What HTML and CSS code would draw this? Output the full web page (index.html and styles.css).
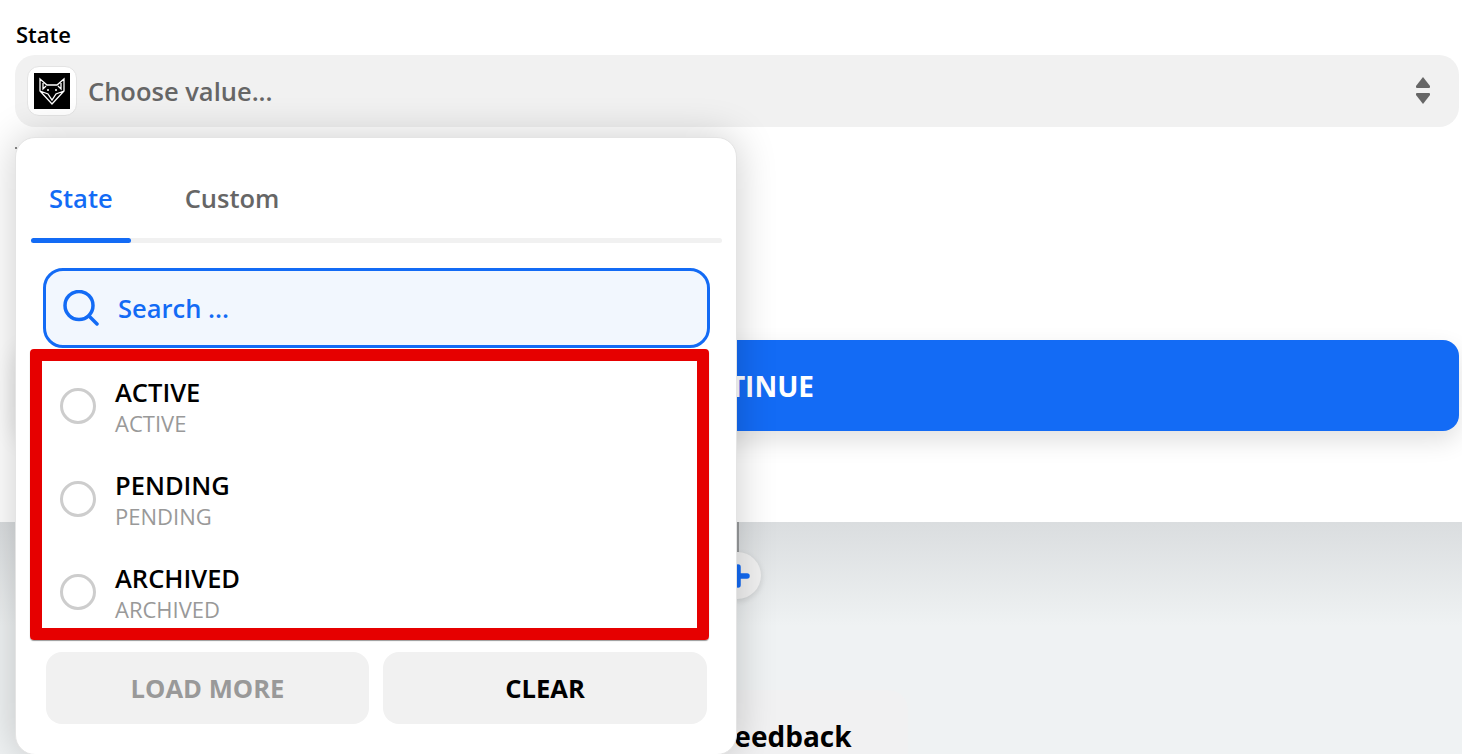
FILE: index.html
```html
<!DOCTYPE html>
<html lang="en">
<head>
    <meta charset="UTF-8">
    <title>State field</title>
    <link rel="stylesheet" href="styles.css">
</head>
<body>
  <div class="page">
    <section class="form-panel">
      <label class="field-label">State</label>
      <div class="select-box">
        <span class="app-icon">
          <span class="app-icon-inner">
            <svg viewBox="0 0 36 36" width="36" height="36">
              <rect width="36" height="36" fill="#000"/>
              <path d="M6 6 L13 12 H23 L30 6 V18 L18 31 L6 18 Z M6 18 L14 21 L18 27 L22 21 L30 18 M9 10 V16 L12 13 M27 10 V16 L24 13" fill="none" stroke="#fff" stroke-width="1.3"/>
              <circle cx="14" cy="17" r="1" fill="#fff"/>
              <circle cx="22" cy="17" r="1" fill="#fff"/>
            </svg>
          </span>
        </span>
        <span class="select-placeholder">Choose value...</span>
        <svg class="select-arrows" viewBox="0 0 16 28" width="16" height="28">
          <path d="M8 0 L15 9 Q15.5 11 14 11 H2 Q0.5 11 1 9 Z" fill="#666"/>
          <path d="M8 27 L15 18 Q15.5 16 14 16 H2 Q0.5 16 1 18 Z" fill="#666"/>
        </svg>
      </div>
      <span class="peek-dot"></span>
      <button class="continue-btn">CONTINUE</button>
    </section>

    <section class="canvas-panel">
      <div class="connector"></div>
      <div class="add-step">
        <svg viewBox="0 0 24 24" width="24" height="24">
          <path d="M12 3 V21 M3 12 H21" stroke="#136bf5" stroke-width="5.5" stroke-linecap="round"/>
        </svg>
      </div>
      <div class="feedback-card">Feedback</div>
    </section>

    <div class="popover">
      <div class="tabs">
        <span class="tab tab-active">State</span>
        <span class="tab">Custom</span>
      </div>
      <div class="tab-track"><div class="tab-bar"></div></div>

      <div class="search-box">
        <svg viewBox="0 0 36 36" width="36" height="36">
          <circle cx="16" cy="15.5" r="14" fill="none" stroke="#136bf5" stroke-width="3.5"/>
          <path d="M26 26 L34 34" stroke="#136bf5" stroke-width="3.5" stroke-linecap="round"/>
        </svg>
        <span>Search ...</span>
      </div>

      <div class="option-list">
        <div class="option">
          <span class="radio"></span>
          <div class="option-text">
            <div class="option-title">ACTIVE</div>
            <div class="option-sub">ACTIVE</div>
          </div>
        </div>
        <div class="option">
          <span class="radio"></span>
          <div class="option-text">
            <div class="option-title">PENDING</div>
            <div class="option-sub">PENDING</div>
          </div>
        </div>
        <div class="option">
          <span class="radio"></span>
          <div class="option-text">
            <div class="option-title">ARCHIVED</div>
            <div class="option-sub">ARCHIVED</div>
          </div>
        </div>
      </div>

      <div class="popover-actions">
        <button class="action-btn action-disabled">LOAD MORE</button>
        <button class="action-btn">CLEAR</button>
      </div>
    </div>
  </div>
</body>
</html>
```

FILE: styles.css
```css
* {
    box-sizing: border-box;
}
body {
    margin: 0;
    font-family: "Open Sans", "Liberation Sans", sans-serif;
    background-color: #fff;
    overflow: hidden;
}
.page {
    position: relative;
    width: 1462px;
    height: 754px;
    overflow: hidden;
}
.form-panel {
    height: 522px;
    padding: 20px 3px 0 15px;
    background-color: #fff;
}
.field-label {
    display: block;
    height: 35px;
    padding-left: 1px;
    font-size: 22px;
    font-weight: 600;
    line-height: 28px;
    color: #000;
}
.select-box {
    display: flex;
    align-items: center;
    height: 72px;
    padding: 0 28px 0 12px;
    background-color: #f1f1f1;
    border-radius: 20px;
}
.app-icon {
    display: flex;
    align-items: center;
    justify-content: center;
    width: 50px;
    height: 50px;
    background-color: #fff;
    border: 1px solid #e4e4e4;
    border-radius: 12px;
}
.app-icon-inner {
    display: block;
    width: 36px;
    height: 36px;
}
.select-placeholder {
    margin-left: 11px;
    font-size: 25.5px;
    font-weight: 600;
    color: #666;
}
.select-arrows {
    margin-left: auto;
}
/* tip of the next field's label, shows through the popover's corner */
.peek-dot {
    display: block;
    width: 2px;
    height: 2px;
    margin-top: 20px;
    background-color: #888;
}
.continue-btn {
    display: block;
    width: calc(100% - 1px);
    height: 91px;
    margin: 191px 0 0 1px;
    padding-left: 650px;
    background-color: #136bf5;
    border: none;
    border-radius: 16px;
    box-shadow: 0 10px 24px rgba(0,0,0,0.12);
    color: #fff;
    font-family: inherit;
    font-size: 28px;
    font-weight: 700;
    text-align: left;
}
.canvas-panel {
    position: relative;
    height: 232px;
    background: linear-gradient(#dadddf, #eff2f3 45%);
}
.connector {
    width: 2px;
    height: 30px;
    margin-left: 737px;
    background-color: #9a9c9e;
}
.add-step {
    display: flex;
    align-items: center;
    justify-content: center;
    width: 47px;
    height: 47px;
    margin-left: 714px;
    background-color: #f1f1f1;
    border-radius: 50%;
    box-shadow: 0 2px 6px rgba(0,0,0,0.12);
}
.feedback-card {
    width: 308px;
    height: 96px;
    margin: 91px 0 0 600px;
    padding: 27px 0 0 119px;
    background-color: #f1f1f2;
    border-radius: 20px;
    font-size: 28px;
    font-weight: 700;
    color: #000;
}
.popover {
    position: absolute;
    top: 137px;
    left: 15px;
    display: flex;
    flex-direction: column;
    width: 722px;
    height: 618px;
    background-color: #fff;
    border: 1px solid #e4e4e4;
    border-radius: 20px;
    box-shadow: 0 0 40px rgba(0,0,0,0.2);
}
.tabs {
    display: flex;
    gap: 72px;
    height: 100px;
    padding: 40px 0 0 33px;
    font-size: 25.5px;
    font-weight: 600;
    line-height: 40px;
    color: #666;
}
.tab-active {
    color: #136bf5;
}
.tab-track {
    height: 5px;
    margin: 0 14px 0 15px;
    background-color: #f1f1f1;
    border-radius: 3px;
}
.tab-bar {
    width: 100px;
    height: 5px;
    background-color: #136bf5;
    border-radius: 3px;
}
.search-box {
    display: flex;
    align-items: center;
    gap: 19px;
    height: 80px;
    margin: 25px 26px 0 27px;
    padding-left: 17px;
    background-color: #f2f7fe;
    border: 3px solid #136bf5;
    border-radius: 20px;
    font-size: 25.5px;
    font-weight: 600;
    color: #136bf5;
}
.option-list {
    height: 291px;
    margin: 1px 27px 0 14px;
    overflow: hidden;
    border: 12px solid #e60000;
    border-radius: 4px;
    box-shadow: 0 1px 1px rgba(0,0,0,0.4);
}
.option {
    display: flex;
    align-items: flex-start;
    height: 93px;
    padding: 14px 0 0 18px;
}
.radio {
    width: 36px;
    height: 36px;
    margin-top: 13px;
    background-color: #fff;
    border: 3px solid #cdcdcd;
    border-radius: 50%;
}
.option-text {
    margin-left: 19px;
}
.option-title {
    font-size: 25.5px;
    font-weight: 600;
    line-height: 34px;
    color: #000;
}
.option-sub {
    font-size: 22px;
    line-height: 28px;
    color: #999;
}
.popover-actions {
    display: flex;
    gap: 14px;
    margin: 12px 29px 0 30px;
}
.action-btn {
    flex: 1;
    height: 72px;
    background-color: #f1f1f1;
    border: none;
    border-radius: 16px;
    color: #000;
    font-family: inherit;
    font-size: 25.6px;
    font-weight: 700;
}
.action-disabled {
    flex: none;
    width: 323px;
    color: #999;
}
```
